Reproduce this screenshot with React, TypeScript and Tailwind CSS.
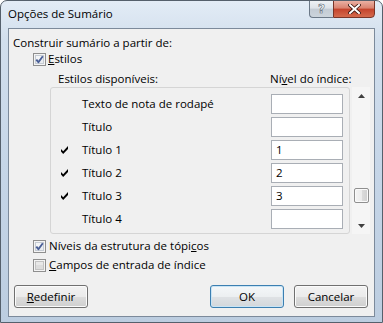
import React from "react";

const font = "font-['Open_Sans',sans-serif] text-[11.5px] leading-none text-black";

function CheckBox({ checked }: { checked: boolean }) {
  return (
    <svg width="13" height="13" viewBox="0 0 13 13" className="shrink-0">
      <rect x="0.5" y="0.5" width="12" height="12" fill="#f4f4f4" stroke="#8f8f8f" />
      <rect x="2.5" y="2.5" width="8" height="8" fill={checked ? "#e9ecf0" : "#dcdcdc"} stroke={checked ? "#c5cbd3" : "#c2c2c2"} />
      <rect x="3" y="3" width="7" height="3" fill={checked ? "#f3f5f7" : "#e8e8e8"} />
      {checked && (
        <path d="M3.3 6.6 L5.4 9.2 L9.8 3.3" fill="none" stroke="#4a5f97" strokeWidth="1.9" strokeLinejoin="round" />
      )}
    </svg>
  );
}

function Tick() {
  return (
    <svg width="7" height="8" viewBox="0 0 7 8" className="shrink-0">
      <polygon points="0,3 2.2,5.2 7,0 7,3 2.2,8 0,5.6" fill="#000" />
    </svg>
  );
}

function Btn({ children, def }: { children: React.ReactNode; def?: boolean }) {
  return (
    <div
      className={
        "w-[74px] h-[23px] rounded-[3px] border flex items-center justify-center " +
        (def
          ? "border-[#3c7fb1] bg-[linear-gradient(180deg,#f4f7f9_0%,#eceff1_50%,#dfe2e5_51%,#d3d7db_100%)] shadow-[inset_0_0_0_1px_#c9e4f5]"
          : "border-[#707070] bg-[linear-gradient(180deg,#f2f2f2_0%,#ebebeb_50%,#dddddd_51%,#cfcfcf_100%)] shadow-[inset_0_0_0_1px_#fbfbfb]")
      }
    >
      <span className={font}>{children}</span>
    </div>
  );
}

const rows: { label: string; value: string; checked: boolean }[] = [
  { label: "Texto de nota de rodapé", value: "", checked: false },
  { label: "Título", value: "", checked: false },
  { label: "Título 1", value: "1", checked: true },
  { label: "Título 2", value: "2", checked: true },
  { label: "Título 3", value: "3", checked: true },
  { label: "Título 4", value: "", checked: false },
];

export default function App() {
  return (
    <div className="w-[383px] h-[323px] overflow-hidden border border-[#55606c] rounded-t-[7px] bg-[linear-gradient(180deg,#e3ecf6_0%,#d2dfed_12%,#c6d6e8_50%,#bccde0_100%)] flex flex-col">
      {/* Title bar */}
      <div className="h-[27px] flex items-start shrink-0">
        <div className={"pl-[7px] h-[26px] flex items-center " + font}>
          <span className="text-[11.5px]">Opções de Sumário</span>
        </div>
        <div className="ml-auto mr-[7px] flex -mt-[1px]">
          <div className="w-[24px] h-[18px] rounded-bl-[4px] border border-[#6b7887] border-r-0 bg-[linear-gradient(180deg,#eef1f4_0%,#dde2e8_45%,#c3cbd4_50%,#ccd4dc_100%)] flex items-center justify-center">
            <span className="font-['DejaVu_Sans',sans-serif] text-[12px] font-bold leading-none text-white [-webkit-text-stroke:0.6px_#5a6674]">?</span>
          </div>
          <div className="w-[42px] h-[18px] rounded-br-[4px] border border-[#7a3528] bg-[linear-gradient(180deg,#eab0a3_0%,#d9826f_45%,#c4432c_50%,#d46a4d_100%)] flex items-center justify-center">
            <svg width="13" height="10" viewBox="0 0 13 10">
              <path d="M2 1 L11 9 M11 1 L2 9" stroke="#3d1710" strokeWidth="3.6" strokeLinecap="square" />
              <path d="M2 1 L11 9 M11 1 L2 9" stroke="#ffffff" strokeWidth="2" strokeLinecap="square" />
            </svg>
          </div>
        </div>
      </div>

      {/* Client area */}
      <div className={"mx-[7px] border border-[#7c8a9b] bg-[#f0f0f0] flex flex-col " + font}>
        <div className="pt-[6px]" />
        <div className="h-[16px] flex items-center pl-[4px]">Construir sumário a partir de:</div>
        <div className="h-[16px] flex items-center pl-[24px] gap-[2px]">
          <CheckBox checked />
          <span>
            <span className="underline">E</span>stilos
          </span>
        </div>
        <div className="h-[16px] mt-[4px] flex items-center pl-[49px]">
          <span className="w-[212px]">Estilos disponíveis:</span>
          <span>
            Ní<span className="underline">v</span>el do índice:
          </span>
        </div>
        <div className="flex ml-[41px]">
          <div className="w-[300px] h-[147px] border border-[#d5d5d5] rounded-[3px] pt-[6px] pl-[10px]">
            {rows.map((r) => (
              <div key={r.label} className="h-[23px] flex">
                <div className="h-[20px] flex items-center w-[21px]">{r.checked && <Tick />}</div>
                <div className="h-[20px] flex items-center w-[189px]">{r.label}</div>
                <div className="w-[72px] h-[20px] bg-white border border-[#a9aeb5] flex items-center pl-[4px]">{r.value}</div>
              </div>
            ))}
          </div>
          <div className="ml-[2px] w-[18px] h-[147px] bg-[#f5f5f5] flex flex-col">
            <div className="h-[17px] flex items-center justify-center">
              <svg width="7" height="4" viewBox="0 0 7 4">
                <polygon points="0,4 3.5,0 7,4" fill="#3f3f3f" />
              </svg>
            </div>
            <div className="flex-1 pt-[84px] flex flex-col items-center">
              <div className="w-[15px] h-[15px] rounded-[2px] border border-[#8f8f8f] bg-[linear-gradient(90deg,#f4f4f4_0%,#ececec_50%,#dcdcdc_51%,#cfcfcf_100%)] shadow-[inset_0_0_0_1px_#fafafa]" />
            </div>
            <div className="h-[17px] flex items-center justify-center">
              <svg width="7" height="4" viewBox="0 0 7 4">
                <polygon points="0,0 7,0 3.5,4" fill="#3f3f3f" />
              </svg>
            </div>
          </div>
        </div>
        <div className="h-[16px] mt-[4px] flex items-center pl-[24px] gap-[3px]">
          <CheckBox checked />
          <span>
            Níveis da estrutura de tópi<span className="underline">c</span>os
          </span>
        </div>
        <div className="h-[16px] mt-[3px] flex items-center pl-[24px] gap-[3px]">
          <CheckBox checked={false} />
          <span>
            <span className="underline">C</span>ampos de entrada de índice
          </span>
        </div>
        <div className="mt-[12px] flex pl-[5px] pr-[6px]">
          <Btn>
            <span className="underline">R</span>edefinir
          </Btn>
          <div className="ml-auto flex gap-[10px]">
            <Btn def>OK</Btn>
            <Btn>Cancelar</Btn>
          </div>
        </div>
        <div className="h-[8px]" />
      </div>
    </div>
  );
}
